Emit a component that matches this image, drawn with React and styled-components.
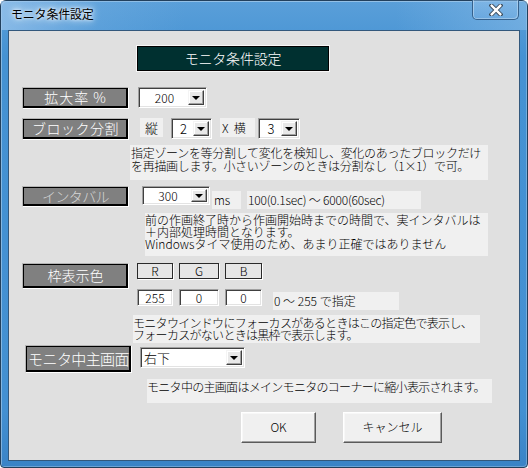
import React from "react";
import styled, { createGlobalStyle } from "styled-components";

const Global = createGlobalStyle`
  html, body { margin: 0; padding: 0; background: #ffffff; overflow: hidden; }
  * { box-sizing: border-box; }
`;

const FONT = `"Noto Sans CJK JP", "Noto Sans", "Liberation Sans", sans-serif`;

const Frame = styled.div`
  width: 528px;
  height: 468px;
  display: flex;
  flex-direction: column;
  border: 1px solid #22405d;
  border-radius: 6px 6px 4px 4px;
  padding: 0 7px 6px 7px;
  background: linear-gradient(180deg, #5a9fd9 0%, #4592d3 12%, #4390d2 88%, #3a83c6 100%);
  box-shadow: inset 1px 1px 0 rgba(255,255,255,0.35), inset -1px -1px 0 rgba(255,255,255,0.25);
  font-family: ${FONT};
  font-weight: 300;
`;

const TitleBar = styled.div`
  height: 29px;
  flex: none;
  display: flex;
  justify-content: space-between;
  align-items: flex-start;
  margin: 0 -7px;
  padding: 0 8px 0 9px;
  background: linear-gradient(90deg, rgba(160,200,238,0.7) 0%, rgba(120,178,228,0.3) 18%, rgba(0,0,0,0) 35%, rgba(0,0,0,0) 75%, rgba(150,196,236,0.45) 100%);
`;

const TitleText = styled.div`
  margin-top: 7px;
  padding-left: 1px;
  font-size: 12px;
  line-height: 12px;
  font-weight: 400;
  color: #000;
  letter-spacing: -0.2px;
  text-shadow: 0 0 6px #e8f2fb, 0 0 10px #e8f2fb, 0 0 3px #ffffff;
`;

const CloseBtn = styled.div`
  width: 47px;
  height: 20px;
  margin-top: -1px;
  display: flex;
  align-items: center;
  justify-content: center;
  border: 1px solid #35618d;
  border-top: none;
  border-radius: 0 0 5px 5px;
  background: linear-gradient(180deg, rgba(140,190,235,0.55), rgba(110,170,226,0.35));
  box-shadow: inset 1px 0 0 rgba(255,255,255,0.35), inset -1px -1px 0 rgba(255,255,255,0.3);
`;

const Client = styled.div`
  flex: 1;
  display: flex;
  flex-direction: column;
  background: #e0e0e0;
  border: 1px solid #33587c;
`;

const Row = styled.div`
  display: flex;
  align-items: flex-start;
  flex: none;
  margin-top: ${p => p.$mt || 0}px;
  margin-left: ${p => p.$ml || 0}px;
`;

const Header = styled.div`
  width: 194px;
  height: 27px;
  background: #003030;
  border: 1px solid #f6f6f6;
  box-shadow: inset 0 0 0 1px #000;
  color: #ffffff;
  font-size: 14px;
  line-height: 24px;
  text-align: center;
  letter-spacing: -0.2px;
`;

const Label = styled.div`
  width: 107px;
  height: ${p => p.$h}px;
  flex: none;
  background: #808080;
  border: 1px solid;
  border-color: #b4b4b4 #ffffff #ffffff #b4b4b4;
  box-shadow: inset 0 0 0 1px #000, inset -1px -1px 0 1px #000;
  color: ${p => p.$dim ? "#d6d6d6" : "#ffffff"};
  font-size: ${p => p.$fs || 14}px;
  line-height: ${p => p.$h - 3}px;
  text-align: center;
  letter-spacing: ${p => p.$ls || 0}px;
  white-space: nowrap;
`;

const SelectBox = styled.div`
  width: ${p => p.$w}px;
  height: ${p => p.$h}px;
  flex: none;
  margin-left: ${p => p.$ml || 0}px;
  margin-top: ${p => p.$mt || 0}px;
  display: flex;
  align-items: stretch;
  background: #ffffff;
  border: 1px solid;
  border-color: #a0a0a0 #ffffff #ffffff #a0a0a0;
  box-shadow: inset 1px 1px 0 #404040, inset -1px -1px 0 #e3e3e3;
  padding: 2px;
`;

const SelectValue = styled.div`
  flex: 1;
  font-size: ${p => p.$fs || 12}px;
  line-height: ${p => p.$lh}px;
  color: #000;
  text-align: ${p => p.$align || "center"};
  padding-left: ${p => p.$pl || 0}px;
  white-space: nowrap;
`;

const DropBtn = styled.div`
  width: 16px;
  flex: none;
  display: flex;
  align-items: center;
  justify-content: center;
  background: #e8e8e8;
  border: 1px solid;
  border-color: #f4f4f4 #404040 #404040 #f4f4f4;
  box-shadow: inset -1px -1px 0 #a0a0a0, inset 1px 1px 0 #ffffff;
`;

const Arrow = styled.div`
  width: 0;
  height: 0;
  border-left: 4px solid transparent;
  border-right: 4px solid transparent;
  border-top: 4px solid #000;
  margin-top: 1px;
`;

const TextBox = styled.div`
  width: ${p => p.$w}px;
  height: ${p => p.$h}px;
  flex: none;
  margin-left: ${p => p.$ml || 0}px;
  margin-top: ${p => p.$mt || 0}px;
  padding-left: ${p => p.$pl || 0}px;
  background: #f0f0f0;
  color: #000;
  font-size: ${p => p.$fs || 12}px;
  line-height: ${p => p.$h}px;
  text-align: ${p => p.$align || "left"};
  white-space: pre;
  letter-spacing: ${p => p.$ls || 0}px;
`;

const Desc = styled.div`
  width: ${p => p.$w}px;
  height: ${p => p.$h}px;
  flex: none;
  padding-top: ${p => p.$pt || 0}px;
  padding-left: ${p => p.$pl || 0}px;
  background: #f0f0f0;
  color: #000;
  font-size: 12px;
  line-height: ${p => p.$lh || 12}px;
  letter-spacing: ${p => p.$ls || 0}px;
  white-space: nowrap;
`;

const ColorGrid = styled.div`
  display: grid;
  grid-template-columns: 36px 40px 37px;
  grid-template-rows: 16px 17px;
  column-gap: 6px;
  row-gap: 10px;
  margin-left: 8px;
  flex: none;
`;

const ColorHead = styled.div`
  background: #e6e6e6;
  border: 1px solid #2a2a2a;
  box-shadow: 1px 1px 0 #ffffff;
  color: #000;
  font-size: 12px;
  line-height: 14px;
  text-align: center;
`;

const ColorInput = styled.div`
  background: #ffffff;
  border: 1px solid;
  border-color: #a0a0a0 #ffffff #ffffff #a0a0a0;
  box-shadow: inset 1px 1px 0 #404040, inset -1px -1px 0 #e3e3e3;
  color: #000;
  font-size: 12px;
  line-height: 15px;
  text-align: center;
`;

const Button = styled.div`
  width: ${p => p.$w}px;
  height: 31px;
  flex: none;
  margin-left: ${p => p.$ml || 0}px;
  background: #f0f0f0;
  border: 1px solid;
  border-color: #ffffff #5a5a5a #5a5a5a #ffffff;
  box-shadow: inset -1px -1px 0 #a0a0a0, inset 1px 1px 0 #f8f8f8;
  color: #000;
  font-size: 12px;
  line-height: 28px;
  text-align: center;
`;

function Select({ w, h, value, ml, mt, align, pl, fs }) {
  return (
    <SelectBox $w={w} $h={h} $ml={ml} $mt={mt}>
      <SelectValue $lh={h - 5} $align={align} $pl={pl} $fs={fs}>{value}</SelectValue>
      <DropBtn><Arrow /></DropBtn>
    </SelectBox>
  );
}

function CloseGlyph() {
  return (
    <svg width="14" height="12" viewBox="0 0 14 12">
      <path d="M2.5 1.5 L11.5 10.5 M11.5 1.5 L2.5 10.5" stroke="#3b4a5a" strokeWidth="4.2" strokeLinecap="square" />
      <path d="M2.8 1.8 L11.2 10.2 M11.2 1.8 L2.8 10.2" stroke="#ffffff" strokeWidth="2.4" strokeLinecap="square" />
    </svg>
  );
}

export default function App() {
  return (
    <>
      <Global />
      <Frame>
        <TitleBar>
          <TitleText>モニタ条件設定</TitleText>
          <CloseBtn><CloseGlyph /></CloseBtn>
        </TitleBar>
        <Client>
          <Row $mt={14} $ml={127}>
            <Header>モニタ条件設定</Header>
          </Row>

          <Row $mt={15} $ml={13}>
            <Label $h={22} $ls={1}>拡大率 %</Label>
            <Select w={69} h={21} ml={9} value="200" />
          </Row>

          <Row $mt={9} $ml={13}>
            <Label $h={22} $ls={0.5}>ブロック分割</Label>
            <TextBox $w={23} $h={19} $ml={11} $align="center" $fs={13}>縦</TextBox>
            <Select w={41} h={21} ml={8} value="2" fs={13} />
            <TextBox $w={35} $h={19} $ml={8} $pl={2} $fs={12}>X  横</TextBox>
            <Select w={42} h={21} ml={3} value="3" fs={13} />
          </Row>

          <Row $mt={5} $ml={121}>
            <Desc $w={358} $h={35} $lh={13} $pt={1} $pl={1} $ls={-0.3}>
              指定ゾーンを等分割して変化を検知し、変化のあったブロックだけ<br />
              を再描画します。小さいゾーンのときは分割なし（1×1）で可。
            </Desc>
          </Row>

          <Row $mt={6} $ml={13}>
            <Label $h={21} $dim $fs={14} $ls={-0.6}>インタバル</Label>
            <Select w={68} h={19} ml={13} value="300" />
            <TextBox $w={29} $h={18} $ml={2} $mt={5} $pl={2}>ms</TextBox>
            <TextBox $w={174} $h={18} $ml={6} $mt={5} $pl={1} $ls={-0.2}>100(0.1sec) ～ 6000(60sec)</TextBox>
          </Row>

          <Row $mt={4} $ml={136}>
            <Desc $w={343} $h={43} $lh={12} $pt={1} $ls={0}>
              前の作画終了時から作画開始時までの時間で、実インタバルは<br />
              ＋内部処理時間となります。<br />
              Windowsタイマ使用のため、あまり正確ではありません
            </Desc>
          </Row>

          <Row $mt={7} $ml={13}>
            <Label $h={26} $fs={14}>枠表示色</Label>
            <ColorGrid>
              <ColorHead>R</ColorHead>
              <ColorHead>G</ColorHead>
              <ColorHead>B</ColorHead>
              <ColorInput>255</ColorInput>
              <ColorInput>0</ColorInput>
              <ColorInput>0</ColorInput>
            </ColorGrid>
            <TextBox $w={126} $h={18} $ml={11} $mt={29} $pl={1}>0 ～ 255 で指定</TextBox>
          </Row>

          <Row $mt={5} $ml={124}>
            <Desc $w={347} $h={28} $lh={12} $pt={2} $ls={-0.7}>
              モニタウインドウにフォーカスがあるときはこの指定色で表示し、<br />
              フォーカスがないときは黒枠で表示します。
            </Desc>
          </Row>

          <Row $mt={2} $ml={16}>
            <Label $h={28} $fs={15} $ls={-0.6}>モニタ中主画面</Label>
            <Select w={105} h={21} ml={8} mt={2} value="右下" align="left" pl={1} fs={13} />
          </Row>

          <Row $mt={6} $ml={138}>
            <Desc $w={345} $h={24} $lh={13} $pt={1} $ls={-0.7}>
              モニタ中の主画面はメインモニタのコーナーに縮小表示されます。
            </Desc>
          </Row>

          <Row $mt={9} $ml={232}>
            <Button $w={75}>OK</Button>
            <Button $w={99} $ml={27}>キャンセル</Button>
          </Row>
        </Client>
      </Frame>
    </>
  );
}
